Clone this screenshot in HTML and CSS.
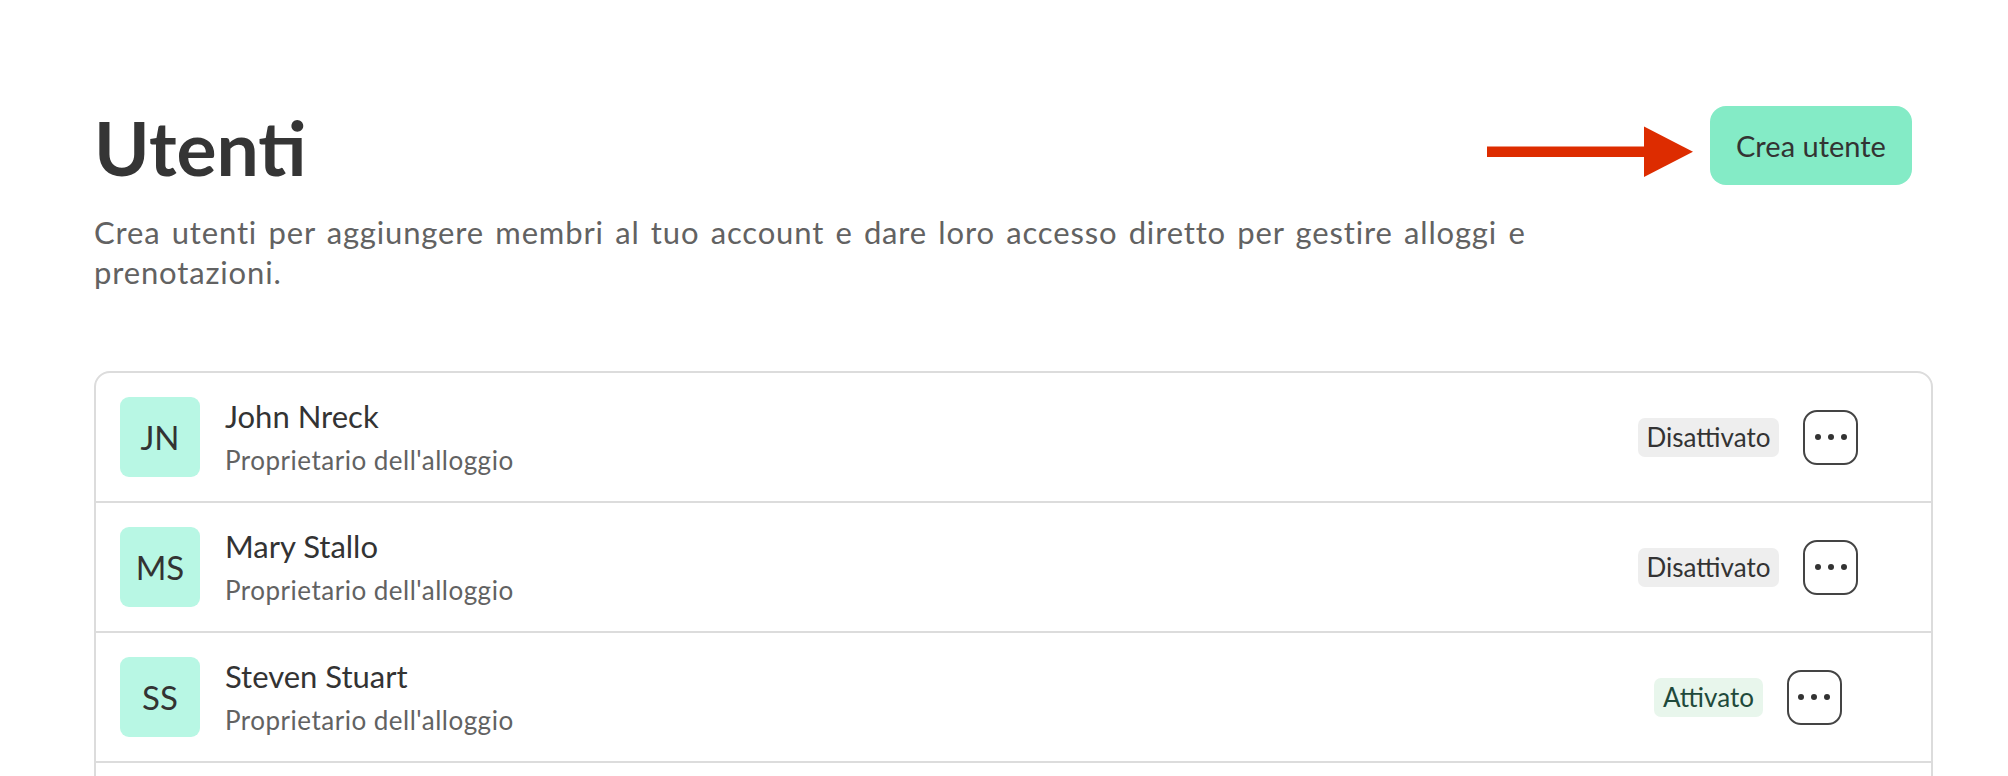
FILE: index.html
```html
<!DOCTYPE html>
<html lang="it">
<head>
<meta charset="utf-8">
<title>Utenti</title>
<link rel="stylesheet" href="styles.css">
</head>
<body>
<main class="page">
  <header class="header">
    <div class="intro">
      <h1 class="title">Utenti</h1>
      <p class="lead">Crea utenti per aggiungere membri al tuo account e dare loro accesso diretto per gestire alloggi e prenotazioni.</p>
    </div>
    <button class="btn-primary" type="button">Crea utente</button>
  </header>

  <svg class="annot-arrow" width="207" height="52" viewBox="0 0 207 52" aria-hidden="true">
    <rect x="0" y="20.5" width="158" height="10.5" fill="#dd2c00"/>
    <polygon points="157,0.5 206,25.8 157,51" fill="#dd2c00"/>
  </svg>

  <section class="card">
    <div class="row">
      <div class="user">
        <div class="avatar">JN</div>
        <div class="info">
          <div class="name">John Nreck</div>
          <div class="role">Proprietario dell'alloggio</div>
        </div>
      </div>
      <div class="actions">
        <span class="badge badge-off">Disattivato</span>
        <button class="btn-more" type="button" aria-label="Altro"><span></span><span></span><span></span></button>
      </div>
    </div>
    <div class="row">
      <div class="user">
        <div class="avatar">MS</div>
        <div class="info">
          <div class="name">Mary Stallo</div>
          <div class="role">Proprietario dell'alloggio</div>
        </div>
      </div>
      <div class="actions">
        <span class="badge badge-off">Disattivato</span>
        <button class="btn-more" type="button" aria-label="Altro"><span></span><span></span><span></span></button>
      </div>
    </div>
    <div class="row">
      <div class="user">
        <div class="avatar">SS</div>
        <div class="info">
          <div class="name">Steven Stuart</div>
          <div class="role">Proprietario dell'alloggio</div>
        </div>
      </div>
      <div class="actions">
        <span class="badge badge-on">Attivato</span>
        <button class="btn-more" type="button" aria-label="Altro"><span></span><span></span><span></span></button>
      </div>
    </div>
  </section>
</main>
</body>
</html>
```

FILE: styles.css
```css
* { box-sizing: border-box; }

html, body {
  margin: 0;
  height: 776px;
  overflow: hidden;
  background: #ffffff;
}

body {
  font-family: Lato, "Liberation Sans", sans-serif;
  color: #333333;
}

.page {
  position: relative;
  padding: 106px 75px 0 94px;
}

.header {
  display: flex;
  justify-content: space-between;
  align-items: flex-start;
  padding-right: 21px;
}

.intro {
  max-width: 1480px;
  padding-top: 4px;
}

.title {
  margin: 0;
  font-size: 75px;
  line-height: 75px;
  font-weight: 700;
  color: #353535;
}

.lead {
  margin: 27px 0 0;
  font-size: 31px;
  line-height: 40px;
  letter-spacing: 0.85px;
  word-spacing: 2.5px;
  color: #626262;
}

.btn-primary {
  flex: none;
  width: 202px;
  height: 79px;
  border: 0;
  border-radius: 16px;
  background: #84ebc6;
  color: #333333;
  font-family: inherit;
  font-size: 29px;
  cursor: pointer;
}

.annot-arrow {
  position: absolute;
  left: 1487px;
  top: 126px;
}

.card {
  margin-top: 79px;
  padding-bottom: 60px;
  border: 2px solid #dcdcdc;
  border-radius: 16px;
}

.row {
  display: flex;
  align-items: center;
  justify-content: space-between;
  padding: 24px;
  border-bottom: 2px solid #dcdcdc;
}

.user {
  display: flex;
  align-items: center;
  gap: 25px;
}

.avatar {
  width: 80px;
  height: 80px;
  border-radius: 9px;
  background: #b8f7e4;
  display: flex;
  align-items: center;
  justify-content: center;
  font-size: 33px;
  color: #333333;
}

.info {
  margin: -3px 0;
}

.name {
  font-size: 31px;
  line-height: 44px;
  color: #333333;
}

.role {
  margin-top: 2px;
  font-size: 26px;
  line-height: 40px;
  letter-spacing: 0.5px;
  color: #626262;
}

.actions {
  width: 318px;
  display: flex;
  align-items: center;
  justify-content: center;
  gap: 24px;
}

.badge {
  height: 39px;
  padding: 0 9px;
  border-radius: 7px;
  display: inline-flex;
  align-items: center;
  font-size: 26px;
}

.badge-off {
  background: #eeeeee;
  color: #333333;
}

.badge-on {
  background: #e8f6ec;
  color: #1f4a3b;
}

.btn-more {
  width: 55px;
  height: 55px;
  border: 2px solid #444444;
  border-radius: 14px;
  background: #ffffff;
  display: flex;
  align-items: center;
  justify-content: center;
  gap: 7px;
  padding: 0;
  cursor: pointer;
}

.btn-more span {
  width: 6px;
  height: 6px;
  border-radius: 50%;
  background: #333333;
}
```
